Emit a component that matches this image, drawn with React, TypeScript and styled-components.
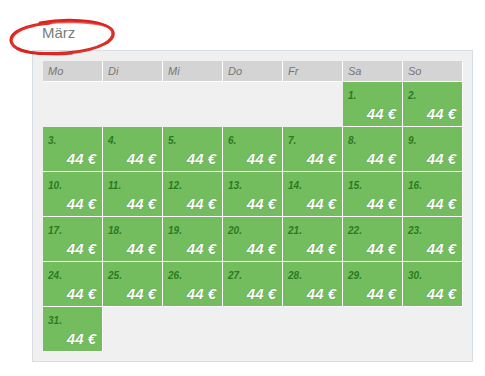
import React from 'react';
import styled, { createGlobalStyle } from 'styled-components';

const GlobalStyle = createGlobalStyle`
  body {
    margin: 0;
    background: #ffffff;
    font-family: Arial, "Liberation Sans", sans-serif;
  }
`;

const Page = styled.div`
  position: relative;
  width: 485px;
  height: 376px;
  padding: 24px 0 0 32px;
  box-sizing: border-box;
`;

const MonthTitle = styled.div`
  position: relative;
  padding-left: 10px;
  height: 26px;
  font-size: 15px;
  line-height: 18px;
  color: #767d83;
`;

// hand-drawn marker circle round the month name
const Scribble = styled.svg`
  position: absolute;
  left: -24px;
  top: -6px;
  pointer-events: none;
`;

const Panel = styled.div`
  width: 419px;
  padding: 10px;
  background: #f0f0f0;
  border: 1px solid #d6dee3;
`;

const Grid = styled.div`
  display: grid;
  grid-template-columns: repeat(7, 59px);
  grid-auto-rows: 44px;
  gap: 1px;
`;

const HeadRow = styled.div`
  display: grid;
  grid-template-columns: repeat(7, 59px);
  gap: 1px;
  margin-bottom: 1px;
`;

const DayHead = styled.div`
  height: 20px;
  background: #d4d4d4;
  box-shadow: 1px 1px 0 #ffffff;
  padding-left: 5px;
  font-size: 11px;
  font-style: italic;
  line-height: 20px;
  color: #777777;
`;

const Cell = styled.div<{ $filled?: boolean }>`
  background: ${(p) => (p.$filled ? '#74bd5f' : 'transparent')};
  box-shadow: ${(p) => (p.$filled ? '1px 1px 0 #ffffff' : 'none')};
  display: flex;
  flex-direction: column;
  justify-content: space-between;
  padding: 8px 6px 4px 5px;
  box-sizing: border-box;
`;

const DayNum = styled.span`
  font-size: 10px;
  font-weight: bold;
  font-style: italic;
  line-height: 12px;
  color: #2c7a1f;
`;

const Price = styled.span`
  align-self: flex-end;
  font-size: 15px;
  font-weight: bold;
  font-style: italic;
  line-height: 16px;
  color: #ffffff;
  text-shadow: 0 0 1px rgba(40, 90, 30, 0.6);
`;

const weekdays = ['Mo', 'Di', 'Mi', 'Do', 'Fr', 'Sa', 'So'];
const leadingBlanks = 5;
const daysInMonth = 31;

const App: React.FC = () => {
  const cells: (number | null)[] = [];
  for (let i = 0; i < leadingBlanks; i++) cells.push(null);
  for (let d = 1; d <= daysInMonth; d++) cells.push(d);

  return (
    <Page>
      <GlobalStyle />
      <MonthTitle>
        <Scribble width="112" height="44" viewBox="0 0 112 44">
          <path
            d="M32 5 C58 0, 96 2, 104 12 C110 21, 94 32, 58 35 C28 37, 5 34, 3 23 C2 14, 18 7, 42 5"
            fill="none"
            stroke="#d9221d"
            strokeWidth="3"
            strokeLinecap="round"
          />
          <path
            d="M20 9 C45 2, 92 3, 103 11 C108 18, 100 29, 70 34 C44 38, 10 36, 4 26 C2 18, 10 11, 26 8"
            fill="none"
            stroke="#e2342c"
            strokeWidth="2"
            strokeLinecap="round"
            opacity="0.8"
          />
          <path
            d="M10 30 C20 36, 45 38, 64 36"
            fill="none"
            stroke="#cf1e1a"
            strokeWidth="1.6"
            strokeLinecap="round"
            opacity="0.7"
          />
        </Scribble>
        März
      </MonthTitle>
      <Panel>
        <HeadRow>
          {weekdays.map((w) => (
            <DayHead key={w}>{w}</DayHead>
          ))}
        </HeadRow>
        <Grid>
          {cells.map((d, i) =>
            d === null ? (
              <Cell key={`b${i}`} />
            ) : (
              <Cell key={d} $filled>
                <DayNum>{d}.</DayNum>
                <Price>44 €</Price>
              </Cell>
            )
          )}
        </Grid>
      </Panel>
    </Page>
  );
};

export default App;
